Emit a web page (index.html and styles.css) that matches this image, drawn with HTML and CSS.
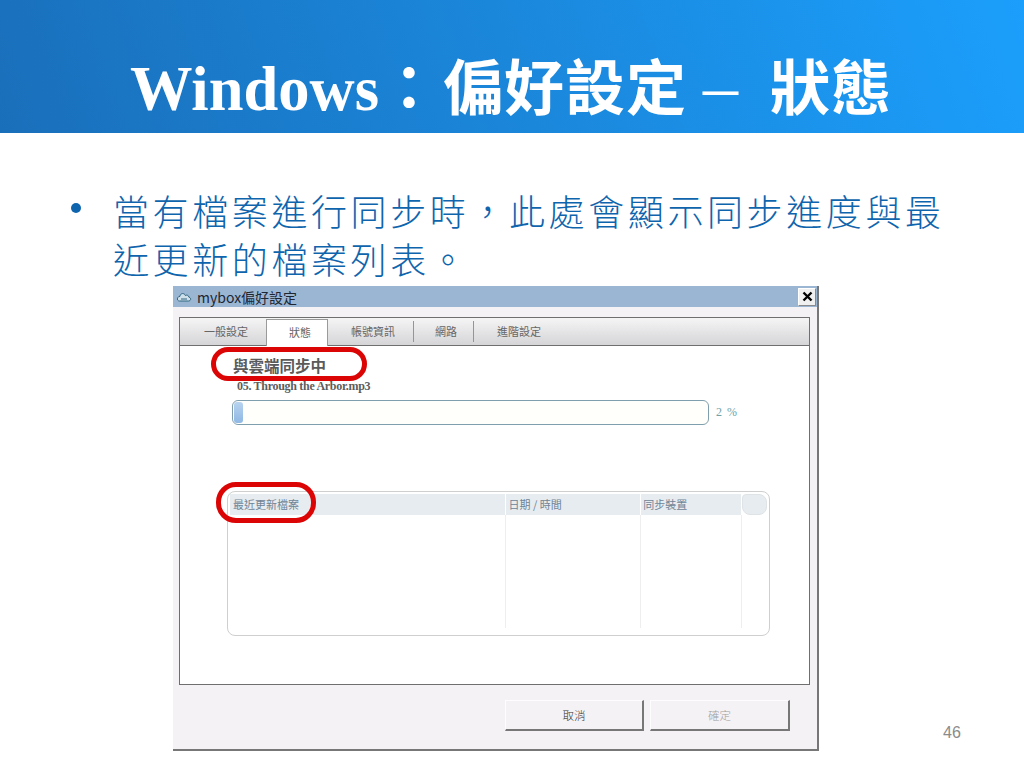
FILE: index.html
```html
<!DOCTYPE html>
<html lang="zh-Hant">
<head>
  <meta charset="UTF-8" />
  <title>Windows：偏好設定 – 狀態</title>
  <link rel="stylesheet" href="styles.css">
</head>
<body>
  <div class="slide">
    <header class="banner">
      <h1><span class="latin">Windows</span><span class="colon">：</span>偏好設定<span class="dash">–</span>狀態</h1>
    </header>
    <ul class="points">
      <li>當有檔案進行同步時，此處會顯示同步進度與最近更新的檔案列表。</li>
    </ul>
    <div class="window">
      <div class="titlebar">
        <svg class="cloud" width="16" height="10" viewBox="0 0 16 10">
          <path d="M3.5 9 H12.5 C15 9 15.5 5.8 13 5.3 C12.8 3.3 10.5 2.6 9.4 3.6 C8.4 0.6 4.2 1 4 4.3 C1 4.3 0.3 9 3.5 9 Z" fill="#cfe0ea" stroke="#2f6480" stroke-width="1"/>
          <path d="M5 7 H11" stroke="#2f6480" stroke-width="1"/>
        </svg>
        <span class="window-name">mybox偏好設定</span>
        <button class="close">
          <svg width="11" height="11" viewBox="0 0 11 11"><path d="M1.5 1.5 L9.5 9.5 M9.5 1.5 L1.5 9.5" stroke="#000" stroke-width="2.4"/></svg>
        </button>
      </div>
      <div class="panel">
        <div class="tabs">
          <div class="tab tab-first">一般設定</div>
          <div class="tab tab-active">狀態</div>
          <div class="tab tab-account">帳號資訊</div>
          <div class="tab tab-net">網路</div>
          <div class="tab tab-more">進階設定</div>
        </div>
        <div class="status">
          <h2>與雲端同步中</h2>
          <p class="filename">05. Through the Arbor.mp3</p>
          <div class="progress-row">
            <div class="progress"><div class="progress-fill" style="width: 2%"></div></div>
            <span class="percent">2 %</span>
          </div>
        </div>
        <div class="table">
          <div class="thead">
            <div class="th col-name">最近更新檔案</div>
            <div class="th col-date">日期 / 時間</div>
            <div class="th col-device">同步裝置</div>
            <div class="th col-end"></div>
          </div>
          <div class="tbody">
            <div class="col-name"></div>
            <div class="col-date"></div>
            <div class="col-device"></div>
          </div>
        </div>
        <div class="ring ring-status"></div>
        <div class="ring ring-table"></div>
      </div>
      <div class="actions">
        <button class="btn">取消</button>
        <button class="btn btn-off">確定</button>
      </div>
    </div>
    <div class="page-no">46</div>
  </div>
</body>
</html>
```

FILE: styles.css
```css
* { margin: 0; padding: 0; box-sizing: border-box; }
body {
  width: 1024px;
  height: 768px;
  overflow: hidden;
  background: white;
  font-family: 'Noto Sans CJK TC', 'Liberation Sans', sans-serif;
}
.slide {
  position: relative;
  width: 1024px;
  height: 768px;
}
.banner {
  height: 133px;
  padding-top: 46px;
  padding-left: 130px;
  background: linear-gradient(70deg, #1a6fba, #1b9ffc);
}
.banner h1 {
  color: white;
  font-size: 60px;
  font-weight: 700;
  line-height: 76px;
  letter-spacing: 1px;
  white-space: nowrap;
}
.banner .latin {
  font-family: 'Liberation Serif', serif;
  font-size: 62.5px;
  letter-spacing: 0;
}
.banner .colon { margin-right: 3px; }
.banner .dash {
  font-family: 'Liberation Serif', serif;
  font-weight: 400;
  font-size: 70px;
  margin: 0 32px 0 16px;
  letter-spacing: 0;
}
.points {
  list-style: none;
  height: 153px;
  padding: 53px 70px 0 113px;
}
.points li {
  position: relative;
  color: #0f65ad;
  font-size: 36px;
  font-weight: 300;
  line-height: 48px;
  letter-spacing: 3.6px;
}
.points li::before {
  content: '';
  position: absolute;
  left: -42px;
  top: 17px;
  width: 10px;
  height: 10px;
  border-radius: 50%;
  background: #0f65ad;
}
.window {
  width: 646px;
  height: 465px;
  margin-left: 173px;
  background: #f5f2f5;
  border-right: 2px solid #777;
  border-bottom: 2px solid #777;
}
.titlebar {
  display: flex;
  align-items: center;
  height: 21px;
  padding-left: 3px;
  background: #9ab6d3;
}
.cloud { margin-right: 5px; }
.window-name {
  flex: 1;
  font-size: 14px;
  color: #1d2733;
}
.close {
  display: flex;
  align-items: center;
  justify-content: center;
  width: 18px;
  height: 18px;
  margin-right: 1px;
  background: #f0f0f0;
  border: 1px solid #8a8a8a;
  border-top-color: #fff;
  border-left-color: #fff;
}
.panel {
  position: relative;
  width: 631px;
  height: 368px;
  margin: 10px 0 0 6px;
  background: white;
  border: 1px solid #6f6f6f;
}
.tabs {
  display: flex;
  height: 28px;
  background: linear-gradient(#f6f5f6, #d5d4d6);
  border-bottom: 1px solid #6f6f6f;
}
.tab {
  font-size: 11px;
  line-height: 27px;
  color: #666;
  white-space: nowrap;
}
.tab-first {
  width: 86px;
  padding-left: 24px;
}
.tab-active {
  width: 62px;
  height: 27px;
  margin-top: 1px;
  padding-left: 22px;
  background: white;
  border: 1px solid #9a9a9a;
  border-bottom: none;
  line-height: 25px;
}
.tab-account {
  width: 85px;
  padding-left: 23px;
}
.tab-net {
  width: 61px;
  height: 21px;
  margin-top: 3px;
  padding-left: 21px;
  line-height: 21px;
  border-left: 1px solid #8a97a5;
  border-right: 1px solid #8a97a5;
}
.tab-more { padding-left: 23px; }
.status { padding: 5px 0 0 52px; }
.status h2 {
  font-size: 15.5px;
  font-weight: 700;
  line-height: 28px;
  color: #5a5a5a;
  padding-left: 1px;
}
.filename {
  font-family: 'Liberation Serif', serif;
  font-size: 12px;
  font-weight: 700;
  line-height: 14px;
  color: #5d5d5d;
  padding-left: 5px;
  letter-spacing: -0.3px;
}
.progress-row {
  display: flex;
  align-items: center;
  margin-top: 7px;
}
.progress {
  width: 477px;
  height: 25px;
  padding: 1px;
  background: #fffffb;
  border: 1px solid #7f9fae;
  border-radius: 6px;
}
.progress-fill {
  height: 100%;
  min-width: 9px;
  background: linear-gradient(#b7d3ef, #8fb8e4);
  border-radius: 3px;
}
.percent {
  margin-left: 7px;
  font-family: 'Liberation Serif', serif;
  font-size: 12px;
  color: #6fa3a8;
  letter-spacing: 1px;
}
.table {
  width: 543px;
  height: 145px;
  margin: 66px 0 0 47px;
  padding: 2px;
  border: 1px solid #cfcfcf;
  border-radius: 8px;
}
.thead {
  display: flex;
  height: 21px;
}
.th {
  font-size: 11px;
  line-height: 21px;
  color: #6f8496;
  background: #e7ecf0;
  padding-left: 2px;
  margin-right: 1px;
  white-space: nowrap;
}
.th.col-name { padding-left: 3px; }
.col-name { width: 276px; }
.col-date { width: 134px; }
.col-device { width: 100px; }
.col-end {
  width: 25px;
  margin-right: 0;
  border-radius: 4px 8px 8px 8px;
  border: 1px solid #dfe3e6;
}
.tbody {
  display: flex;
  height: 113px;
}
.tbody div {
  margin-right: 1px;
  border-right: 1px solid #eeeeee;
}
.ring {
  position: absolute;
  border: 5px solid #dc0505;
  border-radius: 18px;
}
.ring-status {
  left: 31px;
  top: 29px;
  width: 156px;
  height: 34px;
}
.ring-table {
  left: 36px;
  top: 164px;
  width: 100px;
  height: 41px;
  border-radius: 20px;
}
.actions {
  display: flex;
  gap: 6px;
  padding: 15px 0 0 332px;
}
.btn {
  width: 139px;
  height: 31px;
  font-family: inherit;
  font-size: 11.5px;
  font-weight: 300;
  color: #333;
  background: #f5f2f5;
  border: none;
  border-top: 1px solid #fdfdfd;
  border-left: 1px solid #fdfdfd;
  border-right: 2px solid #777;
  border-bottom: 2px solid #777;
}
.btn-off {
  width: 140px;
  color: #a0a0a0;
}
.page-no {
  position: absolute;
  left: 943px;
  top: 724px;
  font-family: 'Liberation Sans', sans-serif;
  font-size: 16px;
  color: #8b8b8b;
}
```
